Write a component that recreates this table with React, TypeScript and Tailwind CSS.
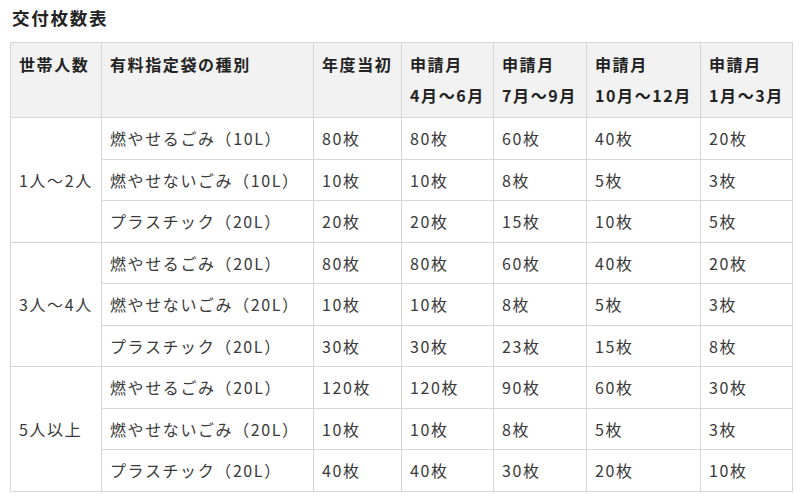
// App.tsx

type Row = {
  kind: string;
  counts: string[];
};

type Group = {
  people: string;
  rows: Row[];
};

const groups: Group[] = [
  {
    people: "1人～2人",
    rows: [
      { kind: "燃やせるごみ（10L）", counts: ["80枚", "80枚", "60枚", "40枚", "20枚"] },
      { kind: "燃やせないごみ（10L）", counts: ["10枚", "10枚", "8枚", "5枚", "3枚"] },
      { kind: "プラスチック（20L）", counts: ["20枚", "20枚", "15枚", "10枚", "5枚"] },
    ],
  },
  {
    people: "3人～4人",
    rows: [
      { kind: "燃やせるごみ（20L）", counts: ["80枚", "80枚", "60枚", "40枚", "20枚"] },
      { kind: "燃やせないごみ（20L）", counts: ["10枚", "10枚", "8枚", "5枚", "3枚"] },
      { kind: "プラスチック（20L）", counts: ["30枚", "30枚", "23枚", "15枚", "8枚"] },
    ],
  },
  {
    people: "5人以上",
    rows: [
      { kind: "燃やせるごみ（20L）", counts: ["120枚", "120枚", "90枚", "60枚", "30枚"] },
      { kind: "燃やせないごみ（20L）", counts: ["10枚", "10枚", "8枚", "5枚", "3枚"] },
      { kind: "プラスチック（20L）", counts: ["40枚", "40枚", "30枚", "20枚", "10枚"] },
    ],
  },
];

const months = ["4月～6月", "7月～9月", "10月～12月", "1月～3月"];

const th =
  "border border-[#d6d6d6] bg-[#f2f2f2] px-2 pt-[6px] pb-[6px] align-top text-left font-bold text-[#222] leading-[31px]";
const td =
  "border border-[#d6d6d6] px-2 py-[5px] align-middle text-left font-normal text-[#3a3a3a] leading-[30.5px]";

export default function App() {
  return (
    <div
      className="w-[800px] h-[500px] bg-white pl-[10px] pt-[6px] text-[16px] tracking-[0.1em]"
      style={{ fontFamily: '"Noto Sans CJK JP", "Noto Sans", sans-serif' }}
    >
      <h2 className="pl-[2px] text-[17.5px] font-bold leading-[24px] text-[#222] tracking-[0.1em]">
        交付枚数表
      </h2>
      <table className="mt-[12px] w-[782px] table-fixed border-collapse border border-[#d6d6d6]">
        <colgroup>
          <col className="w-[91px]" />
          <col className="w-[212px]" />
          <col className="w-[88px]" />
          <col className="w-[92px]" />
          <col className="w-[93px]" />
          <col className="w-[114px]" />
          <col className="w-[92px]" />
        </colgroup>
        <thead>
          <tr>
            <th className={th}>世帯人数</th>
            <th className={th}>有料指定袋の種別</th>
            <th className={th}>年度当初</th>
            {months.map((m) => (
              <th key={m} className={`${th} whitespace-nowrap`}>
                申請月
                <br />
                {m}
              </th>
            ))}
          </tr>
        </thead>
        <tbody>
          {groups.map((g) =>
            g.rows.map((r, i) => (
              <tr key={g.people + i}>
                {i === 0 && (
                  <td rowSpan={3} className={td}>
                    {g.people}
                  </td>
                )}
                <td className={`${td} whitespace-nowrap`}>{r.kind}</td>
                {r.counts.map((c, j) => (
                  <td key={j} className={td}>
                    {c}
                  </td>
                ))}
              </tr>
            ))
          )}
        </tbody>
      </table>
    </div>
  );
}
